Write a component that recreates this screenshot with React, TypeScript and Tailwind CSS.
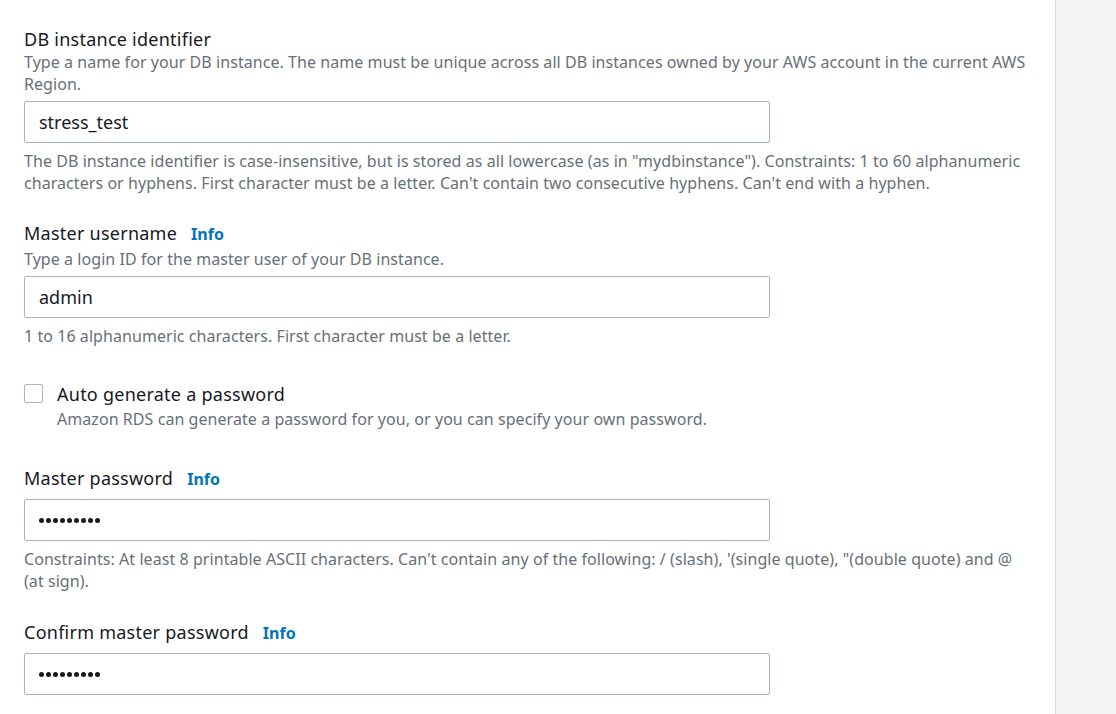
const font = { fontFamily: '"Noto Sans", "Open Sans", sans-serif' };

function Label({ text, info }: { text: string; info?: boolean }) {
  return (
    <div className="flex items-baseline text-[18px] leading-[22px] tracking-[0.25px] text-[#16191f]">
      <span>{text}</span>
      {info && <span className="ml-[14px] text-[16px] font-bold tracking-normal text-[#0073bb]">Info</span>}
    </div>
  );
}

function Hint({ children, className = "" }: { children: React.ReactNode; className?: string }) {
  return <p className={`text-[16px] leading-[22px] tracking-[0.06px] text-[#687078] ${className}`}>{children}</p>;
}

function Field({ value, className = "" }: { value?: string; className?: string }) {
  return (
    <div
      className={`flex h-[42px] w-[746px] items-center rounded-[2px] border border-[#aab7b8] bg-white px-[14px] text-[18px] text-[#16191f] ${className}`}
    >
      {value ?? (
        <div className="flex gap-[2px]">
          {Array.from({ length: 9 }).map((_, i) => (
            <span key={i} className="h-[5px] w-[5px] rounded-full bg-[#16191f]" />
          ))}
        </div>
      )}
    </div>
  );
}

export default function App() {
  return (
    <div className="flex h-[714px] w-[1116px] overflow-hidden bg-white" style={font}>
      <div className="w-[1056px] border-r border-[#d5dbdb] bg-white px-[24px] pt-[28px]">
        <Label text="DB instance identifier" />
        <Hint className="mt-[1px] w-[1008px]">
          Type a name for your DB instance. The name must be unique across all DB instances owned by your AWS account in
          the current AWS Region.
        </Hint>
        <Field value="stress_test" className="mt-[6px]" />
        <Hint className="mt-[7px] w-[1008px]">
          The DB instance identifier is case-insensitive, but is stored as all lowercase (as in "mydbinstance").
          Constraints: 1 to 60 alphanumeric characters or hyphens. First character must be a letter. Can't contain two
          consecutive hyphens. Can't end with a hyphen.
        </Hint>

        <div className="mt-[28px]">
          <Label text="Master username" info />
        </div>
        <Hint className="mt-[3px]">Type a login ID for the master user of your DB instance.</Hint>
        <Field value="admin" className="mt-[6px]" />
        <Hint className="mt-[7px]">1 to 16 alphanumeric characters. First character must be a letter.</Hint>

        <div className="mt-[36px] flex items-start">
          <div className="mt-[1px] h-[19px] w-[19px] rounded-[2px] border border-[#aab7b8] bg-white" />
          <div className="ml-[14px]">
            <div className="text-[18px] leading-[22px] tracking-[0.25px] text-[#16191f]">Auto generate a password</div>
            <Hint className="mt-[3px]">
              Amazon RDS can generate a password for you, or you can specify your own password.
            </Hint>
          </div>
        </div>

        <div className="mt-[37px]">
          <Label text="Master password" info />
        </div>
        <Field className="mt-[9px]" />
        <Hint className="mt-[7px] w-[1008px]">
          Constraints: At least 8 printable ASCII characters. Can't contain any of the following: / (slash), '(single
          quote), "(double quote) and @ (at sign).
        </Hint>

        <div className="mt-[29px]">
          <Label text="Confirm master password" info />
        </div>
        <Field className="mt-[9px]" />
      </div>
      <div className="flex-1 bg-[#f2f3f3]" />
    </div>
  );
}
